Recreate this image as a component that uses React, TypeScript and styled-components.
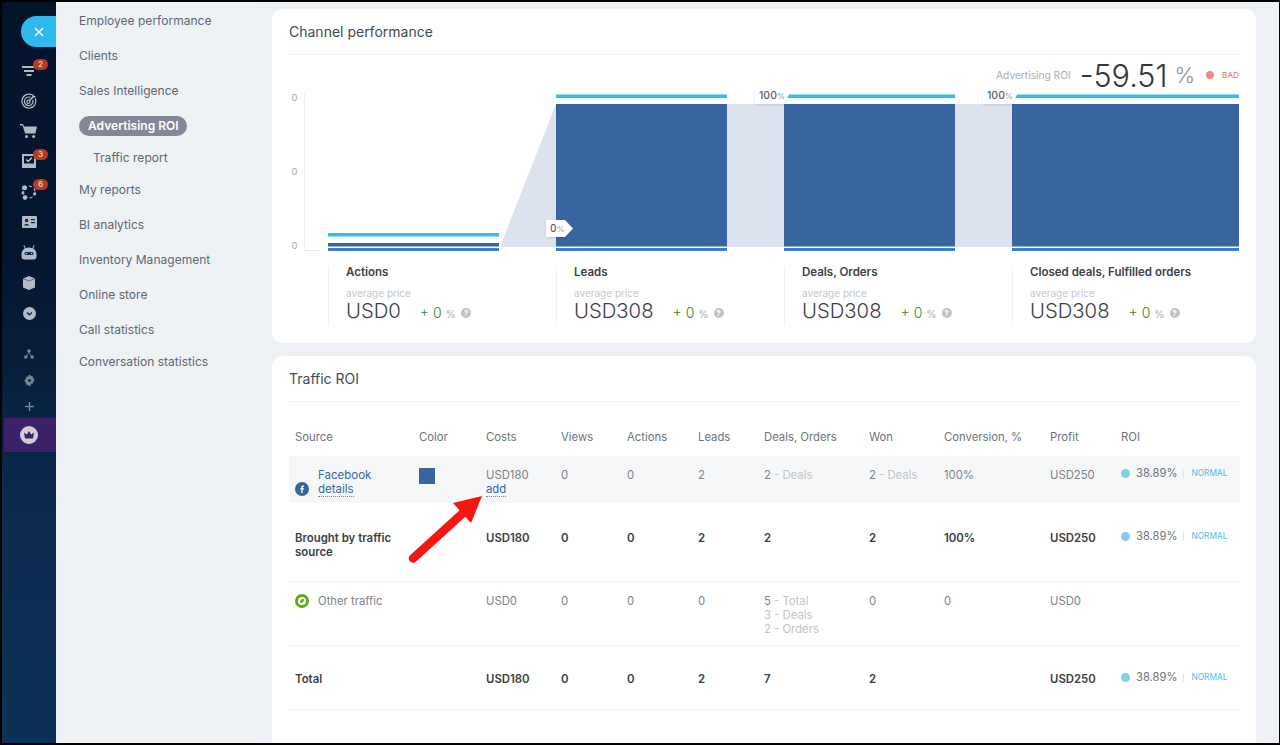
import React from 'react'
import styled, { createGlobalStyle } from 'styled-components'

const GlobalStyle = createGlobalStyle`
  html, body { margin: 0; padding: 0; background: #000; }
  body { font-family: Inter, "Noto Sans", "Liberation Sans", sans-serif; }
`

const Frame = styled.div`
  box-sizing: border-box;
  width: 1280px;
  height: 745px;
  padding: 2px 1px 2px 2px;
  background: #000;
  overflow: hidden;
`
const Shell = styled.div`
  display: flex;
  height: 100%;
  background: #edf1f5;
  overflow: hidden;
`

/* left icon rail */
const Rail = styled.nav`
  flex: 0 0 54px;
  display: flex;
  flex-direction: column;
  align-items: stretch;
  background: linear-gradient(180deg, #03132a 0%, #04162f 35%, #0c2c50 70%, #0d3156 100%);
`
const Toggle = styled.div`
  align-self: flex-end;
  display: flex;
  align-items: center;
  justify-content: center;
  width: 35px;
  height: 31px;
  margin: 14px 0 9px;
  border-radius: 16px 0 0 16px;
  background: #2fb9ee;
`
const RailItem = styled.div<{ $h?: number }>`
  position: relative;
  display: flex;
  align-items: center;
  justify-content: center;
  height: ${({ $h }) => $h || 30}px;
  color: #b4bac3;
`
const RailGap = styled.div`
  height: 13px;
`
const Crown = styled.div`
  display: flex;
  align-items: center;
  justify-content: center;
  height: 34px;
  margin: -1px 0 0 2px;
  padding-right: 3px;
  background: #3c2068;
`
const Badge = styled.span`
  position: absolute;
  top: 3px;
  left: 31px;
  width: 15px;
  height: 11px;
  border-radius: 6px;
  background: #b43a22;
  color: #e9c7bf;
  font-size: 8px;
  font-weight: 600;
  line-height: 11px;
  text-align: center;
`

/* second level menu */
const Menu = styled.aside`
  flex: 0 0 200px;
  box-sizing: border-box;
  padding: 1px 0 0 23px;
  background: #eef2f5;
`
const MenuItem = styled.div<{ $tight?: boolean; $sub?: boolean }>`
  display: flex;
  align-items: center;
  height: ${({ $tight }) => ($tight ? 29 : 35)}px;
  padding-left: ${({ $sub }) => ($sub ? 14 : 0)}px;
  color: #5f6672;
  font-size: 12px;
  letter-spacing: 0.02px;
  white-space: nowrap;
`
const MenuPill = styled.span`
  display: inline-block;
  padding: 0 0 0 9px;
  width: 99px;
  height: 20px;
  border-radius: 10px;
  background: #828896;
  color: #fff;
  font-weight: 600;
  line-height: 20px;
`

/* content */
const Main = styled.main`
  flex: 1;
  min-width: 0;
  padding: 7px 23px 0 16px;
  background: #edf1f5;
`
const Card = styled.section`
  padding: 0 16px 17px 17px;
  border-radius: 10px;
  background: #fff;
  & + & {
    margin-top: 13px;
    padding-bottom: 60px;
  }
`
const CardHead = styled.h2`
  box-sizing: border-box;
  height: 46px;
  margin: 0;
  border-bottom: 1px solid #eef0f3;
  color: #444b55;
  font-size: 14px;
  font-weight: 400;
  line-height: 46px;
`

const Chart = styled.div`
  position: relative;
  height: 205px;
  svg { display: block; }
`
const RoiSummary = styled.div`
  position: absolute;
  top: 0;
  right: 1px;
  display: flex;
  align-items: center;
  height: 40px;
`
const RoiLabel = styled.span`
  color: #a9adb3;
  font-size: 10.2px;
`
const RoiValue = styled.span`
  margin-left: 9px;
  color: #33373d;
  font-size: 30.5px;
  font-weight: 300;
`
const RoiPercent = styled.span`
  margin-left: 7px;
  color: #8b9096;
  font-size: 22px;
  font-weight: 300;
`
const RoiDot = styled.i`
  width: 8px;
  height: 8px;
  margin-left: 11px;
  border-radius: 50%;
  background: #f08a8a;
`
const RoiState = styled.span`
  margin-left: 8px;
  color: #e56a6a;
  font-size: 8.2px;
`

const Stats = styled.div`
  display: grid;
  grid-template-columns: repeat(4, 228px);
  height: 60px;
  padding: 6px 0 0 39px;
`
const Stat = styled.div`
  box-sizing: border-box;
  height: 60px;
  padding-left: 17px;
  border-left: 1px solid #eff1f3;
`
const StatTitle = styled.div`
  color: #3d4248;
  font-size: 11.5px;
  font-weight: 600;
  line-height: 12px;
  white-space: nowrap;
`
const StatHint = styled.div`
  margin-top: 9px;
  color: #c6c9cd;
  font-size: 10px;
  line-height: 12px;
`
const StatLine = styled.div`
  display: flex;
  align-items: baseline;
  height: 24px;
  line-height: 24px;
`
const StatValue = styled.span`
  color: #3c4046;
  font-size: 20.3px;
  font-weight: 300;
`
const StatDelta = styled.span`
  margin-left: 19px;
  color: #1f8a1f;
  font-size: 14px;
  font-weight: 300;
`
const StatPercent = styled.span`
  margin-left: 4px;
  color: #a9adb3;
  font-size: 10.5px;
`
const Help = styled.span`
  align-self: center;
  display: inline-block;
  width: 10px;
  height: 10px;
  margin: 3px 0 0 5px;
  border-radius: 50%;
  background: #bfc2c6;
  color: #fff;
  font-size: 8px;
  font-weight: 700;
  line-height: 10px;
  text-align: center;
`

/* table */
const columns = '124px 67px 75px 66px 71px 66px 105px 75px 106px 71px 125px'
const Table = styled.div`
  position: relative;
`
const Row = styled.div<{ $pad: number; $h: number; $line?: boolean; $shade?: boolean; $bold?: boolean }>`
  display: grid;
  grid-template-columns: ${columns};
  box-sizing: border-box;
  height: ${({ $h }) => $h}px;
  padding-top: ${({ $pad }) => $pad}px;
  border-bottom: ${({ $line }) => ($line ? '1px solid #eef0f3' : '0')};
  background: ${({ $shade }) => ($shade ? '#f5f7f8' : 'transparent')};
  color: ${({ $bold }) => ($bold ? '#3a3e44' : '#7d838b')};
  font-size: ${({ $bold }) => ($bold ? 11.4 : 11.3)}px;
  font-weight: ${({ $bold }) => ($bold ? 600 : 400)};
  line-height: 14px;
`
const HeadRow = styled(Row)`
  color: #6d737b;
`
const Cell = styled.div`
  padding-left: 6px;
`
const SourceCell = styled(Cell)`
  display: flex;
  align-items: flex-end;
  gap: 9px;
  height: 28px;
`
const OtherCell = styled(SourceCell)`
  align-items: center;
  height: 14px;
`
const SourceLink = styled.div`
  color: #36699f;
  font-size: 11.5px;
`
const Dotted = styled.span`
  color: #36699f;
  border-bottom: 1px dotted #5a8ab8;
`
const Swatch = styled.i`
  display: block;
  width: 16px;
  height: 16px;
  background: #38659f;
`
const Count = styled.span`
  color: #7d838b;
`
const Faint = styled.span`
  color: #c2c5ca;
`
const RoiCell = styled(Cell)`
  display: flex;
  align-items: center;
  height: 10px;
  padding-left: 6px;
`
const RoiBullet = styled.i`
  width: 9px;
  height: 9px;
  margin: 0 6px 0 0;
  border-radius: 50%;
  background: #84cdec;
`
const RoiNumber = styled.span`
  color: #6d737b;
  font-size: 11.2px;
  font-weight: 400;
`
const RoiTag = styled.span`
  margin-left: 6px;
  padding-left: 7px;
  border-left: 1px solid #e3e6ea;
  color: #56b9da;
  font-size: 8.4px;
  font-weight: 400;
  line-height: 9px;
`
const Arrow = styled.svg`
  position: absolute;
  left: 111px;
  top: 88px;
`

const Roi = () => (
  <RoiCell>
    <RoiBullet />
    <RoiNumber>38.89%</RoiNumber>
    <RoiTag>NORMAL</RoiTag>
  </RoiCell>
)

const bars = [
  { x: 328, w: 171, top: 233, fill: 243 },
  { x: 556, w: 171, top: 94.5, fill: 104 },
  { x: 784, w: 171, top: 94.5, fill: 104 },
  { x: 1012, w: 227, top: 94.5, fill: 104 },
]

const stats = [
  { title: 'Actions', value: 'USD0' },
  { title: 'Leads', value: 'USD308' },
  { title: 'Deals, Orders', value: 'USD308' },
  { title: 'Closed deals, Fulfilled orders', value: 'USD308' },
]

const menu: { label: string; tight?: boolean }[] = [
  { label: 'Employee performance' },
  { label: 'Clients' },
  { label: 'Sales Intelligence' },
]
const menuRest: { label: string; tight?: boolean }[] = [
  { label: 'My reports' },
  { label: 'BI analytics' },
  { label: 'Inventory Management' },
  { label: 'Online store' },
  { label: 'Call statistics' },
  { label: 'Conversation statistics', tight: true },
]

const Tag100 = ({ x }: { x: number }) => (
  <g>
    <polygon
      points={`${x},88 ${x + 36},88 ${x + 36},91 ${x + 29},104 ${x},104`}
      fill="#fff"
      filter="url(#tagShadow)"
    />
    <text x={x + 4} y={99} fontSize="10.5" fontWeight="500" fill="#5c6168">100<tspan fill="#9a9ea4" fontSize="8">%</tspan></text>
  </g>
)

const ChartDrawing = () => (
  <svg width="951" height="205" viewBox="289 55 951 205" fontFamily="Inter, sans-serif">
    <defs>
      <filter id="tagShadow" x="-20%" y="-20%" width="140%" height="150%">
        <feDropShadow dx="0" dy="1" stdDeviation="1" floodColor="#000" floodOpacity="0.12" />
      </filter>
    </defs>
    <line x1="304.5" y1="93" x2="304.5" y2="250" stroke="#eff1f3" />
    <line x1="304" y1="250.5" x2="319" y2="250.5" stroke="#e4e7ea" />
    <text x="291.5" y="101" fontSize="9.5" fill="#a6aaaf">0</text>
    <text x="291.5" y="175" fontSize="9.5" fill="#a6aaaf">0</text>
    <text x="291.5" y="249" fontSize="9.5" fill="#a6aaaf">0</text>
    <polygon points="500,247 556,104 556,247" fill="#dde3ee" />
    <rect x="727" y="104" width="57" height="143" fill="#dde3ee" />
    <rect x="955" y="104" width="57" height="143" fill="#dde3ee" />
    {bars.map(b => (
      <g key={b.x}>
        <rect x={b.x} y={b.top} width={b.w} height="3.5" fill="#35bdec" />
        <rect x={b.x} y={b.fill} width={b.w} height={246.5 - b.fill} fill="#38659f" />
        <rect x={b.x} y="248" width={b.w} height="3" fill="#3a80cf" />
      </g>
    ))}
    <polygon points="546,220 565,220 573,228.5 565,237 546,237" fill="#fff" filter="url(#tagShadow)" />
    <text x="550" y="232" fontSize="10" fontWeight="500" fill="#5c6168">0<tspan fill="#9a9ea4" fontSize="8">%</tspan></text>
    <Tag100 x={755} />
    <Tag100 x={983} />
  </svg>
)

const icons = {
  funnel: (
    <svg width="16" height="14" viewBox="0 0 16 14" fill="currentColor">
      <rect x="1" y="2" width="14" height="2" />
      <rect x="3" y="6" width="10" height="2" />
      <rect x="5.5" y="10" width="5" height="2" />
    </svg>
  ),
  target: (
    <svg width="18" height="18" viewBox="0 0 18 18" fill="none" stroke="currentColor" strokeWidth="1.2">
      <path d="M12 2.8A7 7 0 1 0 15.3 6.2" />
      <path d="M10.5 5.4A4.3 4.3 0 1 0 12.7 7.7" />
      <circle cx="8.4" cy="9.7" r="1.6" />
      <path d="M9 9l5-5M13 2.4v2.4h2.4" strokeWidth="1.6" />
    </svg>
  ),
  cart: (
    <svg width="18" height="16" viewBox="0 0 18 16" fill="currentColor">
      <path d="M0 1h3l1 2.5h13l-1.6 7H5.2L2.5 2.6H0z" />
      <circle cx="6.5" cy="13.6" r="1.5" />
      <circle cx="13.6" cy="13.6" r="1.5" />
    </svg>
  ),
  task: (
    <svg width="14" height="14" viewBox="0 0 14 14">
      <rect width="14" height="14" fill="currentColor" />
      <rect x="2" y="2" width="10" height="7.5" fill="#06182f" />
      <path d="M4.2 5.6l2 1.8 3.6-3.6" fill="none" stroke="#d5d9de" strokeWidth="1.3" />
    </svg>
  ),
  crm: (
    <svg width="18" height="18" viewBox="0 0 18 18" fill="currentColor">
      <circle cx="9" cy="9" r="6" fill="none" stroke="currentColor" strokeWidth="1.2" strokeDasharray="3 2.500" />
      <circle cx="4.500" cy="4.800" r="2.500" />
      <circle cx="3" cy="10" r="1.500" />
      <circle cx="5" cy="14.600" r="2.300" />
      <circle cx="14.600" cy="11" r="1.600" />
    </svg>
  ),
  contact: (
    <svg width="15" height="12" viewBox="0 0 15 12">
      <rect width="15" height="12" rx="1" fill="currentColor" />
      <circle cx="4.6" cy="4.5" r="1.7" fill="#0a2444" />
      <path d="M2 9.6c.4-2.2 4.8-2.2 5.2 0z" fill="#0a2444" />
      <rect x="9" y="3" width="4" height="1.2" fill="#0a2444" />
      <rect x="9" y="6" width="4" height="1.2" fill="#0a2444" />
    </svg>
  ),
  robot: (
    <svg width="16" height="15" viewBox="0 0 16 15" fill="currentColor">
      <path d="M3.2 0l1.5 3.2A7 7 0 0 1 8 2.6c1.2 0 2.3.2 3.3.6L12.800 0l.8.4-1.400 3.200C14.400 4.900 15.500 6.800 15.500 9.400v2c0 1.800-1 3-2.800 3H3.300c-1.800 0-2.800-1.200-2.800-3v-2c0-2.600 1.100-4.500 3.300-5.800L2.400.4z" />
      <rect x="3.500" y="7" width="9" height="3" rx="1.500" fill="#0b2746" />
      <circle cx="5.500" cy="8.500" r="0.8" />
      <circle cx="10.500" cy="8.500" r="0.8" />
    </svg>
  ),
  box: (
    <svg width="12" height="14" viewBox="0 0 12 14" fill="currentColor">
      <path d="M6 0l6 2.500v9L6 14l-6-2.500v-9z" />
      <path d="M0 2.500L6 5l6-2.500" fill="none" stroke="#0b2746" strokeWidth="0.500" />
    </svg>
  ),
  more: (
    <svg width="13" height="13" viewBox="0 0 13 13">
      <circle cx="6.500" cy="6.500" r="6.500" fill="currentColor" />
      <path d="M4 5.500l2.500 2.300L9 5.500" fill="none" stroke="#0c2b4e" strokeWidth="1.500" />
    </svg>
  ),
  tree: (
    <svg width="10" height="10" viewBox="0 0 10 10" fill="#7d8894">
      <circle cx="5" cy="2" r="1.800" />
      <circle cx="1.900" cy="8" r="1.800" />
      <circle cx="8.100" cy="8" r="1.800" />
      <path d="M4.600 3L2 7.500h.8L5 3.500l2.200 4h.8L5.400 3z" />
    </svg>
  ),
  gear: (
    <svg width="11" height="11" viewBox="0 0 11 11">
      <path
        d="M4.500 0h2l.3 1.500 1-.5L9.400 2.300l-.7 1 1.500.7v2l-1.500.4.700 1.200-1.500 1.300-1-.7L6.500 11h-2l-.3-1.600-1.200.7L1.600 8.800l.7-1.200L.8 7V4.500l1.500-.4-.7-1.300L3 1.300l1.200.6z"
        fill="#7d8894"
      />
      <circle cx="5.500" cy="5.500" r="1.600" fill="#0d2f53" />
    </svg>
  ),
  plus: (
    <svg width="9" height="9" viewBox="0 0 9 9" fill="#7d8894">
      <rect x="3.800" width="1.400" height="9" />
      <rect y="3.800" width="9" height="1.400" />
    </svg>
  ),
  crown: (
    <svg width="18" height="18" viewBox="0 0 18 18">
      <circle cx="9" cy="9" r="9" fill="#cfcdd6" />
      <path d="M4 6.500l2.800 2L9 5l2.200 3.500 2.800-2-1 6H5z" fill="#3c2068" />
    </svg>
  ),
}

const FacebookIcon = () => (
  <svg width="14" height="14" viewBox="0 0 14 14" style={{ flex: 'none' }}>
    <circle cx="7" cy="7" r="7" fill="#38659f" />
    <path d="M7.600 11V7.500h1.200l.2-1.300H7.600v-.8c0-.4.100-.6.600-.6H9V3.600c-.3 0-.6-.1-1-.1-1 0-1.700.6-1.700 1.700v1H5.200v1.300h1.100V11z" fill="#fff" />
  </svg>
)
const LeafIcon = () => (
  <svg width="14" height="14" viewBox="0 0 14 14" style={{ flex: 'none' }}>
    <circle cx="7" cy="7" r="7" fill="#5fa81c" />
    <circle cx="7" cy="7" r="4" fill="#fff" />
    <path d="M4.800 9.200c0-2.600 1.600-4.200 4.400-4.400 0 2.800-1.600 4.400-4.400 4.400z" fill="#5fa81c" />
  </svg>
)

export default function App() {
  return (
    <Frame>
      <GlobalStyle />
      <Shell>
        <Rail>
          <Toggle>
            <svg width="10" height="10" viewBox="0 0 10 10" stroke="#fff" strokeWidth="1.500">
              <path d="M1 1l8 8M9 1l-8 8" />
            </svg>
          </Toggle>
          <RailItem>{icons.funnel}<Badge>2</Badge></RailItem>
          <RailItem>{icons.target}</RailItem>
          <RailItem>{icons.cart}</RailItem>
          <RailItem>{icons.task}<Badge>3</Badge></RailItem>
          <RailItem $h={31}>{icons.crm}<Badge>6</Badge></RailItem>
          <RailItem>{icons.contact}</RailItem>
          <RailItem>{icons.robot}</RailItem>
          <RailItem $h={31}>{icons.box}</RailItem>
          <RailItem>{icons.more}</RailItem>
          <RailGap />
          <RailItem $h={26}>{icons.tree}</RailItem>
          <RailItem $h={26}>{icons.gear}</RailItem>
          <RailItem $h={26}>{icons.plus}</RailItem>
          <Crown>{icons.crown}</Crown>
        </Rail>

        <Menu>
          {menu.map(m => <MenuItem key={m.label}>{m.label}</MenuItem>)}
          <MenuItem><MenuPill>Advertising ROI</MenuPill></MenuItem>
          <MenuItem $tight $sub>Traffic report</MenuItem>
          {menuRest.map(m => <MenuItem key={m.label} $tight={m.tight}>{m.label}</MenuItem>)}
        </Menu>

        <Main>
          <Card>
            <CardHead>Channel performance</CardHead>
            <Chart>
              <ChartDrawing />
              <RoiSummary>
                <RoiLabel>Advertising ROI</RoiLabel>
                <RoiValue>-59.51</RoiValue>
                <RoiPercent>%</RoiPercent>
                <RoiDot />
                <RoiState>BAD</RoiState>
              </RoiSummary>
            </Chart>
            <Stats>
              {stats.map(s => (
                <Stat key={s.title}>
                  <StatTitle>{s.title}</StatTitle>
                  <StatHint>average price</StatHint>
                  <StatLine>
                    <StatValue>{s.value}</StatValue>
                    <StatDelta>+ 0</StatDelta>
                    <StatPercent>%</StatPercent>
                    <Help>?</Help>
                  </StatLine>
                </Stat>
              ))}
            </Stats>
          </Card>

          <Card>
            <CardHead>Traffic ROI</CardHead>
            <Table>
              <HeadRow $h={54} $pad={28}>
                <Cell>Source</Cell>
                <Cell>Color</Cell>
                <Cell>Costs</Cell>
                <Cell>Views</Cell>
                <Cell>Actions</Cell>
                <Cell>Leads</Cell>
                <Cell>Deals, Orders</Cell>
                <Cell>Won</Cell>
                <Cell>Conversion, %</Cell>
                <Cell>Profit</Cell>
                <Cell>ROI</Cell>
              </HeadRow>
              <Row $h={47} $pad={12} $shade>
                <SourceCell>
                  <FacebookIcon />
                  <SourceLink>Facebook<br /><Dotted>details</Dotted></SourceLink>
                </SourceCell>
                <Cell><Swatch /></Cell>
                <Cell>USD180<br /><Dotted>add</Dotted></Cell>
                <Cell>0</Cell>
                <Cell>0</Cell>
                <Cell>2</Cell>
                <Cell><Count>2</Count> <Faint>- Deals</Faint></Cell>
                <Cell><Count>2</Count> <Faint>- Deals</Faint></Cell>
                <Cell>100%</Cell>
                <Cell>USD250</Cell>
                <Roi />
              </Row>
              <Row $h={79} $pad={28} $line $bold>
                <Cell>Brought by traffic source</Cell>
                <Cell />
                <Cell>USD180</Cell>
                <Cell>0</Cell>
                <Cell>0</Cell>
                <Cell>2</Cell>
                <Cell>2</Cell>
                <Cell>2</Cell>
                <Cell>100%</Cell>
                <Cell>USD250</Cell>
                <Roi />
              </Row>
              <Row $h={64} $pad={12} $line>
                <OtherCell>
                  <LeafIcon />
                  <span>Other&nbsp;traffic</span>
                </OtherCell>
                <Cell />
                <Cell>USD0</Cell>
                <Cell>0</Cell>
                <Cell>0</Cell>
                <Cell>0</Cell>
                <Cell>
                  <Count>5</Count> <Faint>- Total</Faint><br />
                  <Faint>3 - Deals</Faint><br />
                  <Faint>2 - Orders</Faint>
                </Cell>
                <Cell>0</Cell>
                <Cell>0</Cell>
                <Cell>USD0</Cell>
                <Cell />
              </Row>
              <Row $h={64} $pad={26} $line $bold>
                <Cell>Total</Cell>
                <Cell />
                <Cell>USD180</Cell>
                <Cell>0</Cell>
                <Cell>0</Cell>
                <Cell>2</Cell>
                <Cell>7</Cell>
                <Cell>2</Cell>
                <Cell />
                <Cell>USD250</Cell>
                <Roi />
              </Row>
              <Arrow width="95" height="80" viewBox="400 490 95 80">
                <path d="M413 558.500L463 513" stroke="#f5160f" strokeWidth="8.500" strokeLinecap="round" />
                <polygon points="482,496 453,503 471,523" fill="#f5160f" />
              </Arrow>
            </Table>
          </Card>
        </Main>
      </Shell>
    </Frame>
  )
}
